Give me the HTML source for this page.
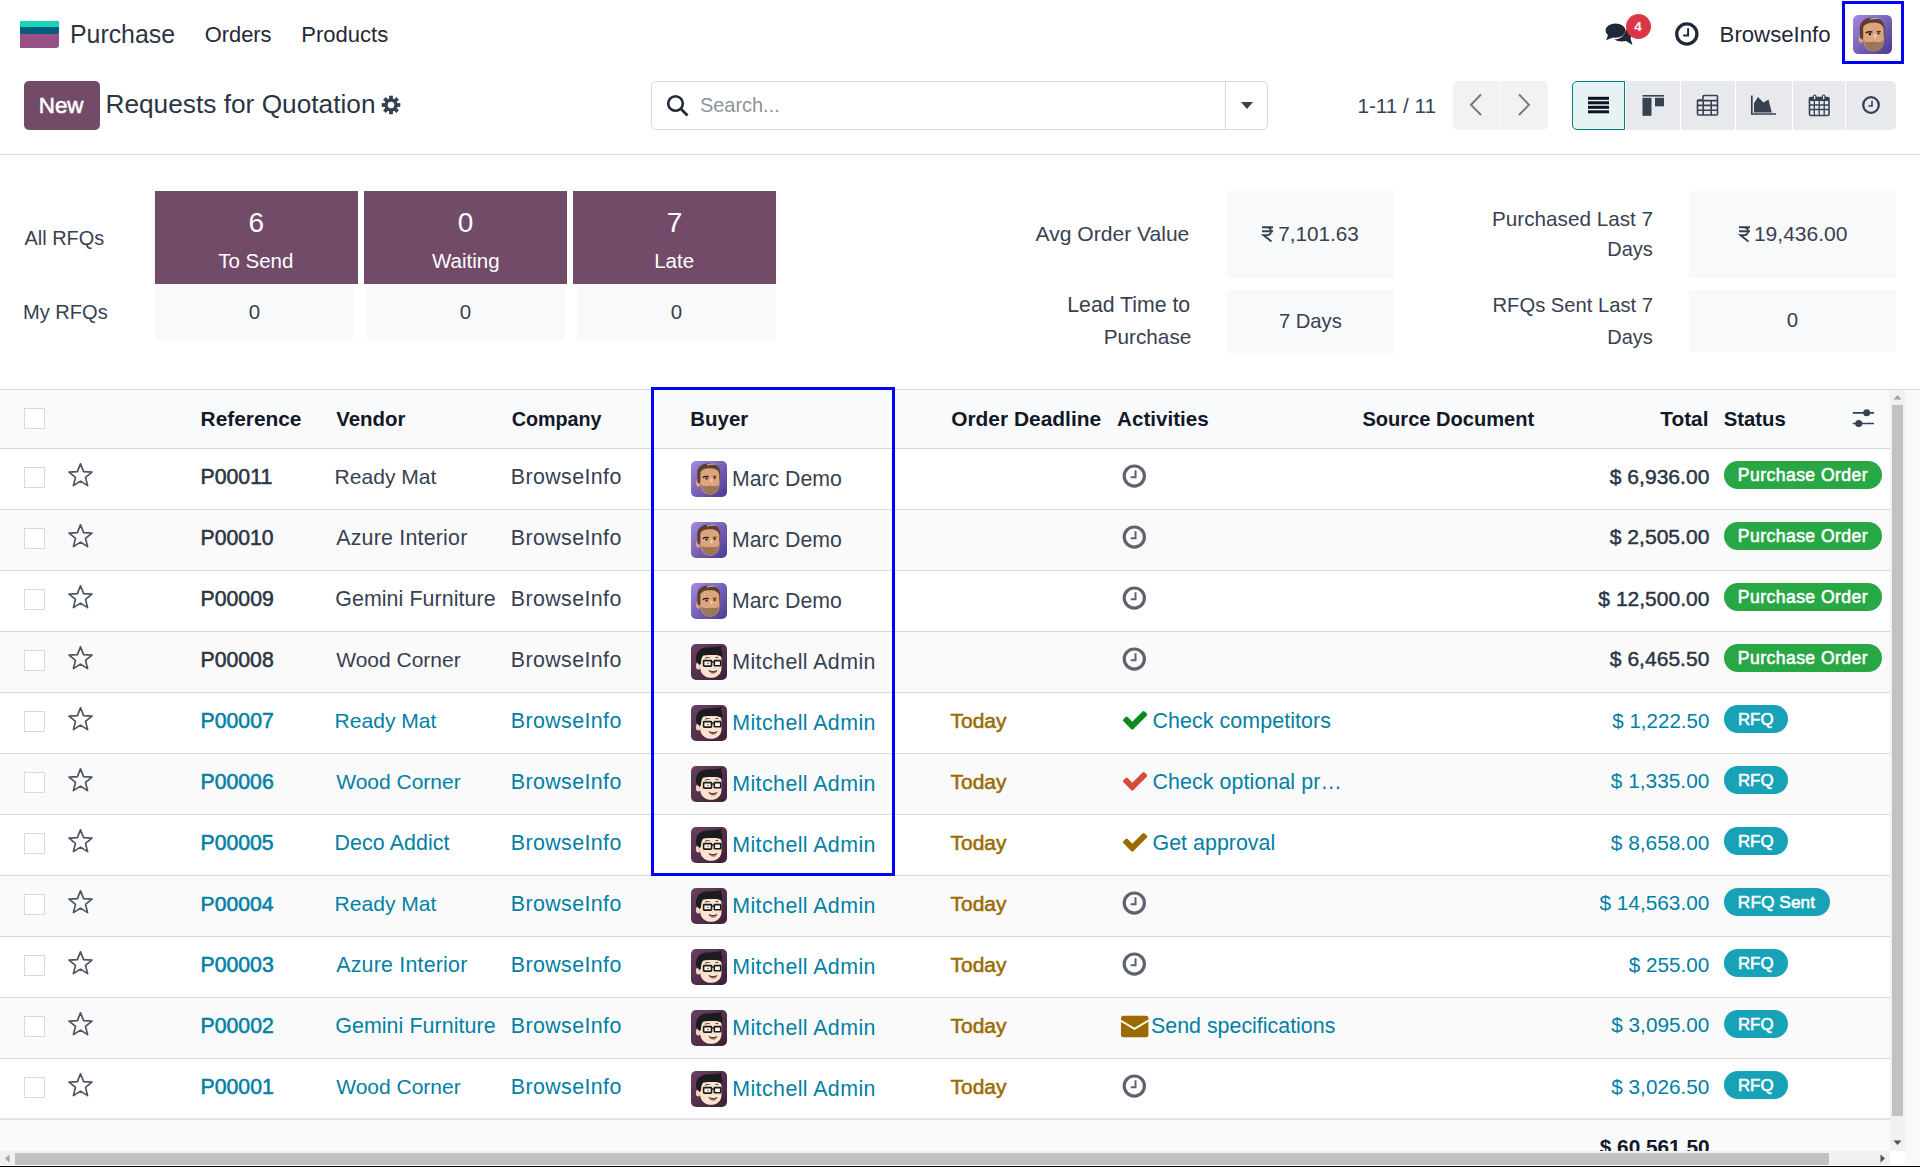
<!DOCTYPE html>
<html><head><meta charset="utf-8"><title>Requests for Quotation</title>
<style>
html,body{margin:0;padding:0;background:#fff;}
body{width:1920px;height:1167px;position:relative;overflow:hidden;font-family:"Liberation Sans",sans-serif;}
.t{position:absolute;white-space:nowrap;}
.r{position:absolute;box-sizing:content-box;}
svg.r{overflow:visible;}
</style></head><body>
<svg class="r" style="left:20px;top:21px;" width="39" height="27" viewBox="0 0 39 27">
<path d="M0 0 H36 a3 3 0 0 1 3 3 V24 a3 3 0 0 1 -3 3 H0 Z" fill="#985184"/>
<path d="M0 0 H36 a3 3 0 0 1 3 3 V10 a3 3 0 0 1 -3 3 H0 Z" fill="#005e7a"/>
<path d="M0 0 H36 a3 3 0 0 1 3 3 V6 H0 Z" fill="#1ad3bb"/>
</svg>
<div class="t" style="left:69.96px;top:22px;font-size:24.89px;line-height:24.89px;color:#2b3544;font-weight:400;">Purchase</div>
<div class="t" style="left:204.71px;top:24px;font-size:21.87px;line-height:21.87px;color:#1f2937;font-weight:400;">Orders</div>
<div class="t" style="left:301.19px;top:24px;font-size:22.07px;line-height:22.07px;color:#1f2937;font-weight:400;">Products</div>
<svg class="r" style="left:1604px;top:22px;" width="32" height="26" viewBox="0 0 32 26">
<ellipse cx="11.5" cy="8.6" rx="10" ry="7.2" fill="#1f2937"/>
<path d="M4 13 L2.2 18.2 L10 15 Z" fill="#1f2937"/>
<path d="M22 7.5 C27 9 28.5 13 26.5 16.5 L28.5 23 L22 19 C18 20 13 19.5 10.5 17.5 C16 17 20.5 14.5 22 7.5 Z" fill="#1f2937"/>
</svg>
<div class="r" style="left:1625.6px;top:14px;width:25.4px;height:25.4px;border-radius:50%;background:#dc3545;"></div>
<div class="t" style="left:1634.18px;top:20px;font-size:13.5px;line-height:13.5px;color:#fff;font-weight:700;">4</div>
<svg class="r" style="left:1674px;top:22px;" width="26" height="24" viewBox="0 0 26 24">
<circle cx="12.8" cy="12" r="10.1" fill="none" stroke="#1f2937" stroke-width="3.3"/>
<path d="M14.1 6.2 V13.4 H9.2" fill="none" stroke="#1f2937" stroke-width="2"/>
</svg>
<div class="t" style="left:1719.58px;top:24px;font-size:22.2px;line-height:22.2px;color:#1f2937;font-weight:400;">BrowseInfo</div>
<svg class="r" style="left:1853px;top:15px;" width="39" height="39" viewBox="0 0 36 36">
<defs><linearGradient id="mg" x1="0" y1="0" x2="1" y2="1"><stop offset="0" stop-color="#a58ae0"/><stop offset="1" stop-color="#4b3a8e"/></linearGradient></defs>
<rect x="0" y="0" width="36" height="36" rx="5" fill="url(#mg)"/>
<ellipse cx="7.4" cy="22" rx="2.4" ry="3.8" fill="#dba47c"/>
<path d="M6.2 12 C6.5 5 12 2.2 18.5 2.2 C25 2.2 29.5 6 29.2 13 L29 20 L26 21 L25 10 C21 8.5 15 8.5 10 10.5 L9 23 L6.4 21 Z" fill="#5e3f2c"/>
<path d="M9.4 12 C10 8.5 14 7.2 19 7.2 C24.5 7.2 27.8 9 28.2 13 L28.5 23 C28.5 30 24 33.6 19 33.6 C14 33.6 10.2 30 9.8 24 Z" fill="#dca57d"/>
<path d="M10.2 23.5 C11 30 14.5 33.6 19.2 33.6 C24 33.6 27.8 30 28.2 23 C26.5 25.5 23.5 25.2 19.5 24.8 C15.5 25 12.5 26 10.2 23.5 Z" fill="#9c7659"/>
<path d="M16 3.2 C19 2.2 23 2.4 25.5 4 C22.5 3.6 19 3.6 16 4.4 Z" fill="#b9a3d6"/>
<path d="M11.8 16.6 C13.5 15.4 16 15.2 17.8 15.6" stroke="#2a1d14" stroke-width="1.4" fill="none"/>
<circle cx="15.6" cy="17.6" r="1.1" fill="#1b1410"/><circle cx="23.6" cy="16.9" r="1" fill="#1b1410"/>
<path d="M21.8 15.6 C23 15 24.6 15 25.6 15.4" stroke="#3a2a1d" stroke-width="1" fill="none"/>
<ellipse cx="20.4" cy="19.5" rx="1.2" ry="2.2" fill="#f2c8a8"/>
</svg>
<div class="r" style="left:1842px;top:1px;width:56px;height:57px;border:3px solid #0000ff;"></div>
<div class="r" style="left:24px;top:81px;width:76px;height:49px;border-radius:5px;background:#714b67;"></div>
<div class="t" style="left:38.76px;top:95px;font-size:22.39px;line-height:22.39px;color:#fff;font-weight:500;-webkit-text-stroke:0.55px #fff;">New</div>
<div class="t" style="left:105.44px;top:91px;font-size:26.28px;line-height:26.28px;color:#2b3544;font-weight:400;">Requests for Quotation</div>
<svg class="r" style="left:381px;top:95px;" width="20" height="20" viewBox="0 0 20 20">
<g transform="translate(10 10)" fill="#374151">
<circle r="6.6"/>
<rect x="-1.9" y="-9.3" width="3.8" height="4" transform="rotate(0)"/><rect x="-1.9" y="-9.3" width="3.8" height="4" transform="rotate(45)"/><rect x="-1.9" y="-9.3" width="3.8" height="4" transform="rotate(90)"/><rect x="-1.9" y="-9.3" width="3.8" height="4" transform="rotate(135)"/><rect x="-1.9" y="-9.3" width="3.8" height="4" transform="rotate(180)"/><rect x="-1.9" y="-9.3" width="3.8" height="4" transform="rotate(225)"/><rect x="-1.9" y="-9.3" width="3.8" height="4" transform="rotate(270)"/><rect x="-1.9" y="-9.3" width="3.8" height="4" transform="rotate(315)"/>
<circle r="3.3" fill="#fff"/>
</g>
</svg>
<div class="r" style="left:651px;top:81px;width:615px;height:47px;border:1px solid #d8dadd;border-radius:5px;background:#fff;"></div>
<div class="r" style="left:1225px;top:82px;width:1px;height:47px;background:#d8dadd;"></div>
<svg class="r" style="left:666px;top:94px;" width="24" height="23" viewBox="0 0 24 23">
<circle cx="9.5" cy="9.5" r="7.3" fill="none" stroke="#1f2937" stroke-width="2.6"/>
<path d="M14.8 14.8 L21.5 21.5" stroke="#1f2937" stroke-width="2.8"/>
</svg>
<div class="t" style="left:699.89px;top:96px;font-size:19.97px;line-height:19.97px;color:#8f949c;font-weight:400;">Search...</div>
<svg class="r" style="left:1240px;top:101px;" width="14" height="9" viewBox="0 0 14 9"><path d="M1 1 H13 L7 8 Z" fill="#374151"/></svg>
<div class="t" style="left:1357.43px;top:96px;font-size:20.67px;line-height:20.67px;color:#374151;font-weight:400;">1-11 / 11</div>
<div class="r" style="left:1453px;top:81px;width:95px;height:49px;border-radius:5px;background:#f1f2f4;"></div>
<div class="r" style="left:1500px;top:81px;width:1px;height:49px;background:#fff;"></div>
<svg class="r" style="left:1466px;top:92px;" width="20" height="26" viewBox="0 0 20 26"><path d="M15 2.5 L5 12.8 L15 23" fill="none" stroke="#787878" stroke-width="1.9"/></svg>
<svg class="r" style="left:1514.3px;top:92px;" width="20" height="26" viewBox="0 0 20 26"><path d="M5 2.5 L15 12.8 L5 23" fill="none" stroke="#787878" stroke-width="1.9"/></svg>
<div class="r" style="left:1572px;top:81px;width:324px;height:49px;border-radius:5px;background:#e7e9ed;overflow:hidden;"></div>
<div class="r" style="left:1572px;top:81px;width:51px;height:47px;border:1px solid #017e84;border-radius:5px 0 0 5px;background:#e6f2f3;"></div>
<div class="r" style="left:1625px;top:81px;width:1px;height:49px;background:#fff;"></div>
<div class="r" style="left:1680px;top:81px;width:1px;height:49px;background:#fff;"></div>
<div class="r" style="left:1735px;top:81px;width:1px;height:49px;background:#fff;"></div>
<div class="r" style="left:1792px;top:81px;width:1px;height:49px;background:#fff;"></div>
<div class="r" style="left:1845px;top:81px;width:1px;height:49px;background:#fff;"></div>
<svg class="r" style="left:1587px;top:96px;" width="23" height="18" viewBox="0 0 23 18"><rect x="1" y="0.8" width="21" height="3" fill="#0b1220"/><rect x="1" y="5.3" width="21" height="3" fill="#0b1220"/><rect x="1" y="9.8" width="21" height="3" fill="#0b1220"/><rect x="1" y="14.3" width="21" height="3" fill="#0b1220"/></svg>
<svg class="r" style="left:1641px;top:94px;" width="24" height="23" viewBox="0 0 24 23"><rect x="1.5" y="1" width="21.5" height="1.6" fill="#374151"/><rect x="1.5" y="3.8" width="9" height="18" fill="#374151"/><rect x="14" y="3.8" width="9" height="8.5" fill="#374151"/></svg>
<svg class="r" style="left:1696px;top:94px;" width="23" height="23" viewBox="0 0 23 23">
<path d="M7 5.5 V2.5 a1 1 0 0 1 1 -1 H20.5 a1 1 0 0 1 1 1 V20 a1 1 0 0 1 -1 1 H2.5 a1 1 0 0 1 -1 -1 V7 a1 1 0 0 1 1 -1 H7" fill="none" stroke="#374151" stroke-width="1.6"/>
<path d="M1.5 6.6 H21.5 M1.5 11.4 H21.5 M1.5 16.2 H21.5 M7.2 6.5 V21 M15.2 6.5 V21" stroke="#374151" stroke-width="1.6"/>
</svg>
<svg class="r" style="left:1750px;top:95px;" width="28" height="21" viewBox="0 0 28 21">
<path d="M1.8 0.5 V19 H26" fill="none" stroke="#374151" stroke-width="1.7"/>
<path d="M4 17.6 V8.2 L8 2 L13.5 7.5 L18.5 4.5 L21.8 17.6 Z" fill="#374151"/>
</svg>
<svg class="r" style="left:1808px;top:94px;" width="23" height="23" viewBox="0 0 23 23">
<rect x="1.5" y="3.5" width="19.5" height="18" rx="1.2" fill="none" stroke="#374151" stroke-width="1.6"/>
<rect x="1.5" y="3.5" width="19.5" height="3.5" fill="#374151"/>
<path d="M1.5 11 H21 M1.5 15.5 H21 M6.3 7 V21.5 M11.2 7 V21.5 M16.2 7 V21.5" stroke="#374151" stroke-width="1.3"/>
<rect x="5.5" y="1" width="2.4" height="5" rx="1.2" fill="#fff" stroke="#374151" stroke-width="1.2"/>
<rect x="14.5" y="1" width="2.4" height="5" rx="1.2" fill="#fff" stroke="#374151" stroke-width="1.2"/>
</svg>
<svg class="r" style="left:1861px;top:95px;" width="20" height="20" viewBox="0 0 20 20">
<circle cx="10" cy="10" r="7.8" fill="none" stroke="#374151" stroke-width="2.3"/>
<path d="M11 5.8 V11 H7.5" fill="none" stroke="#374151" stroke-width="1.6"/>
</svg>
<div class="r" style="left:0px;top:154px;width:1920px;height:1px;background:#d8dadd;"></div>
<div class="t" style="left:24.56px;top:229px;font-size:19.91px;line-height:19.91px;color:#374151;font-weight:400;">All RFQs</div>
<div class="t" style="left:22.95px;top:302px;font-size:20.08px;line-height:20.08px;color:#374151;font-weight:400;">My RFQs</div>
<div class="r" style="left:155px;top:191px;width:203px;height:93px;background:#714b67;"></div>
<div class="t" style="left:248.62px;top:209px;font-size:28px;line-height:28px;color:#fff;font-weight:400;">6</div>
<div class="t" style="left:218.18px;top:251px;font-size:20.5px;line-height:20.5px;color:#fff;font-weight:400;">To Send</div>
<div class="r" style="left:155px;top:285px;width:199px;height:55px;background:#f8f9fa;border-radius:4px;"></div>
<div class="t" style="left:248.80px;top:302px;font-size:20.5px;line-height:20.5px;color:#374151;font-weight:400;">0</div>
<div class="r" style="left:364px;top:191px;width:203px;height:93px;background:#714b67;"></div>
<div class="t" style="left:457.71px;top:209px;font-size:28px;line-height:28px;color:#fff;font-weight:400;">0</div>
<div class="t" style="left:431.94px;top:251px;font-size:20.5px;line-height:20.5px;color:#fff;font-weight:400;">Waiting</div>
<div class="r" style="left:366px;top:285px;width:199px;height:55px;background:#f8f9fa;border-radius:4px;"></div>
<div class="t" style="left:459.80px;top:302px;font-size:20.5px;line-height:20.5px;color:#374151;font-weight:400;">0</div>
<div class="r" style="left:573px;top:191px;width:203px;height:93px;background:#714b67;"></div>
<div class="t" style="left:666.70px;top:209px;font-size:28px;line-height:28px;color:#fff;font-weight:400;">7</div>
<div class="t" style="left:654.17px;top:251px;font-size:20.5px;line-height:20.5px;color:#fff;font-weight:400;">Late</div>
<div class="r" style="left:577px;top:285px;width:199px;height:55px;background:#f8f9fa;border-radius:4px;"></div>
<div class="t" style="left:670.80px;top:302px;font-size:20.5px;line-height:20.5px;color:#374151;font-weight:400;">0</div>
<div class="r" style="left:1227px;top:191px;width:167px;height:87px;background:#f8f9fa;"></div>
<div class="r" style="left:1227px;top:290px;width:167px;height:63px;background:#f8f9fa;"></div>
<div class="r" style="left:1689px;top:191px;width:207px;height:87px;background:#f8f9fa;"></div>
<div class="r" style="left:1689px;top:290px;width:207px;height:62px;background:#f8f9fa;"></div>
<div class="t" style="left:1035.56px;top:223px;font-size:21.07px;line-height:21.07px;color:#374151;font-weight:400;">Avg Order Value</div>
<div class="t" style="left:1067.26px;top:295px;font-size:21.25px;line-height:21.25px;color:#374151;font-weight:400;">Lead Time to</div>
<div class="t" style="left:1103.70px;top:327px;font-size:20.74px;line-height:20.74px;color:#374151;font-weight:400;">Purchase</div>
<div class="t" style="left:1492.05px;top:209px;font-size:20.69px;line-height:20.69px;color:#374151;font-weight:400;">Purchased Last 7</div>
<div class="t" style="left:1607.26px;top:240px;font-size:19.95px;line-height:19.95px;color:#374151;font-weight:400;">Days</div>
<div class="t" style="left:1492.54px;top:295px;font-size:20.19px;line-height:20.19px;color:#374151;font-weight:400;">RFQs Sent Last 7</div>
<div class="t" style="left:1607.26px;top:328px;font-size:19.95px;line-height:19.95px;color:#374151;font-weight:400;">Days</div>
<svg class="r" style="left:1261px;top:226px;" width="13" height="16" viewBox="0 0 13 16">
<path d="M1 1.2 H12 M1 5.2 H12 M3 1.2 H5.5 C9 1.2 10 3 10 5.2 C10 8 8 9.3 5 9.3 H2.5 L10.5 15.5" fill="none" stroke="#374151" stroke-width="1.9"/>
</svg>
<div class="t" style="left:1278.34px;top:224px;font-size:20.7px;line-height:20.7px;color:#374151;font-weight:400;">7,101.63</div>
<div class="t" style="left:1278.91px;top:311px;font-size:20.2px;line-height:20.2px;color:#374151;font-weight:400;">7 Days</div>
<svg class="r" style="left:1737.5px;top:225.7px;" width="13" height="16" viewBox="0 0 13 16">
<path d="M1 1.2 H12 M1 5.2 H12 M3 1.2 H5.5 C9 1.2 10 3 10 5.2 C10 8 8 9.3 5 9.3 H2.5 L10.5 15.5" fill="none" stroke="#374151" stroke-width="1.9"/>
</svg>
<div class="t" style="left:1753.90px;top:223px;font-size:21.05px;line-height:21.05px;color:#374151;font-weight:400;">19,436.00</div>
<div class="t" style="left:1786.80px;top:310px;font-size:20.5px;line-height:20.5px;color:#374151;font-weight:400;">0</div>
<div class="r" style="left:0px;top:389px;width:1920px;height:1px;background:#d8dadd;"></div>
<div class="r" style="left:1905px;top:390px;width:15px;height:775px;background:#f8f9fa;"></div>
<div class="r" style="left:0px;top:390px;width:1890px;height:58px;background:#f9fafb;"></div>
<div class="r" style="left:0px;top:448px;width:1890px;height:1px;background:#d8dadd;"></div>
<div class="r" style="left:24px;top:408px;width:19px;height:19px;border:1px solid #d8dadd;background:#fff;"></div>
<div class="t" style="left:200.60px;top:409px;font-size:20.87px;line-height:20.87px;color:#111827;font-weight:700;">Reference</div>
<div class="t" style="left:336.16px;top:409px;font-size:20.42px;line-height:20.42px;color:#111827;font-weight:700;">Vendor</div>
<div class="t" style="left:511.69px;top:410px;font-size:19.73px;line-height:19.73px;color:#111827;font-weight:700;">Company</div>
<div class="t" style="left:690.33px;top:409px;font-size:20.45px;line-height:20.45px;color:#111827;font-weight:700;">Buyer</div>
<div class="t" style="left:951.14px;top:409px;font-size:20.93px;line-height:20.93px;color:#111827;font-weight:700;">Order Deadline</div>
<div class="t" style="left:1117.09px;top:409px;font-size:20.64px;line-height:20.64px;color:#111827;font-weight:700;">Activities</div>
<div class="t" style="left:1362.42px;top:409px;font-size:20.08px;line-height:20.08px;color:#111827;font-weight:700;">Source Document</div>
<div class="t" style="left:1660.29px;top:409px;font-size:20.8px;line-height:20.8px;color:#111827;font-weight:700;">Total</div>
<div class="t" style="left:1723.71px;top:409px;font-size:20.33px;line-height:20.33px;color:#111827;font-weight:700;">Status</div>
<svg class="r" style="left:1851px;top:408px;" width="24" height="20" viewBox="0 0 24 20">
<path d="M1.8 4.8 H23 M1.8 15.5 H23" stroke="#374151" stroke-width="1.7"/>
<circle cx="15.7" cy="4.8" r="3.5" fill="#374151"/><circle cx="7.7" cy="15.5" r="3.5" fill="#374151"/>
</svg>
<div class="r" style="left:0px;top:449px;width:1890px;height:60px;background:#fff;"></div>
<div class="r" style="left:0px;top:509px;width:1890px;height:1px;background:#d8dadd;"></div>
<div class="r" style="left:24px;top:467px;width:19px;height:19px;border:1px solid #d8dadd;background:#fff;"></div>
<svg class="r" style="left:67px;top:462px;" width="27" height="26" viewBox="0 0 27 26"><path d="M13.5 1.8 L16.6 9.6 L25 10.1 L18.5 15.4 L20.6 23.6 L13.5 19.1 L6.4 23.6 L8.5 15.4 L2 10.1 L10.4 9.6 Z" fill="none" stroke="#4b5563" stroke-width="1.7" stroke-linejoin="round"/></svg>
<div class="t" style="left:200.56px;top:467px;font-size:21.25px;line-height:21.25px;color:#2b3544;font-weight:500;-webkit-text-stroke:0.55px #2b3544;">P00011</div>
<div class="t" style="left:334.57px;top:466px;font-size:21.07px;line-height:21.07px;color:#374151;font-weight:400;">Ready Mat</div>
<div class="t" style="left:510.74px;top:467px;font-size:21.4px;line-height:21.4px;color:#374151;font-weight:400;letter-spacing:0.400px;">BrowseInfo</div>
<svg class="r" style="left:691px;top:461px;" width="36" height="36" viewBox="0 0 36 36">
<defs><linearGradient id="mg" x1="0" y1="0" x2="1" y2="1"><stop offset="0" stop-color="#a58ae0"/><stop offset="1" stop-color="#4b3a8e"/></linearGradient></defs>
<rect x="0" y="0" width="36" height="36" rx="5" fill="url(#mg)"/>
<ellipse cx="7.4" cy="22" rx="2.4" ry="3.8" fill="#dba47c"/>
<path d="M6.2 12 C6.5 5 12 2.2 18.5 2.2 C25 2.2 29.5 6 29.2 13 L29 20 L26 21 L25 10 C21 8.5 15 8.5 10 10.5 L9 23 L6.4 21 Z" fill="#5e3f2c"/>
<path d="M9.4 12 C10 8.5 14 7.2 19 7.2 C24.5 7.2 27.8 9 28.2 13 L28.5 23 C28.5 30 24 33.6 19 33.6 C14 33.6 10.2 30 9.8 24 Z" fill="#dca57d"/>
<path d="M10.2 23.5 C11 30 14.5 33.6 19.2 33.6 C24 33.6 27.8 30 28.2 23 C26.5 25.5 23.5 25.2 19.5 24.8 C15.5 25 12.5 26 10.2 23.5 Z" fill="#9c7659"/>
<path d="M16 3.2 C19 2.2 23 2.4 25.5 4 C22.5 3.6 19 3.6 16 4.4 Z" fill="#b9a3d6"/>
<path d="M11.8 16.6 C13.5 15.4 16 15.2 17.8 15.6" stroke="#2a1d14" stroke-width="1.4" fill="none"/>
<circle cx="15.6" cy="17.6" r="1.1" fill="#1b1410"/><circle cx="23.6" cy="16.9" r="1" fill="#1b1410"/>
<path d="M21.8 15.6 C23 15 24.6 15 25.6 15.4" stroke="#3a2a1d" stroke-width="1" fill="none"/>
<ellipse cx="20.4" cy="19.5" rx="1.2" ry="2.2" fill="#f2c8a8"/>
</svg>
<div class="t" style="left:731.95px;top:469px;font-size:21.28px;line-height:21.28px;color:#374151;font-weight:400;">Marc Demo</div>
<svg class="r" style="left:1122px;top:464px;" width="25" height="25" viewBox="0 0 25 25">
<circle cx="12.3" cy="12.1" r="10.1" fill="none" stroke="#5f636f" stroke-width="3.2"/>
<path d="M13.5 6.3 V13.2 H8.7" fill="none" stroke="#5f636f" stroke-width="2"/>
</svg>
<div class="t" style="left:1609.77px;top:466px;font-size:21.08px;line-height:21.08px;color:#2b3544;font-weight:400;-webkit-text-stroke:0.45px #2b3544;">$ 6,936.00</div>
<div class="r" style="left:1724px;top:461px;width:158px;height:28px;border-radius:14px;background:#28a745;"></div>
<div class="t" style="left:1737.86px;top:467px;font-size:17.6px;line-height:17.6px;color:#fff;font-weight:500;-webkit-text-stroke:0.55px #fff;letter-spacing:0.423px;">Purchase Order</div>
<div class="r" style="left:0px;top:510px;width:1890px;height:60px;background:#fafafa;"></div>
<div class="r" style="left:0px;top:570px;width:1890px;height:1px;background:#d8dadd;"></div>
<div class="r" style="left:24px;top:528px;width:19px;height:19px;border:1px solid #d8dadd;background:#fff;"></div>
<svg class="r" style="left:67px;top:523px;" width="27" height="26" viewBox="0 0 27 26"><path d="M13.5 1.8 L16.6 9.6 L25 10.1 L18.5 15.4 L20.6 23.6 L13.5 19.1 L6.4 23.6 L8.5 15.4 L2 10.1 L10.4 9.6 Z" fill="none" stroke="#4b5563" stroke-width="1.7" stroke-linejoin="round"/></svg>
<div class="t" style="left:200.56px;top:527px;font-size:21.19px;line-height:21.19px;color:#2b3544;font-weight:500;-webkit-text-stroke:0.55px #2b3544;">P00010</div>
<div class="t" style="left:336.26px;top:528px;font-size:21.4px;line-height:21.4px;color:#374151;font-weight:400;letter-spacing:0.203px;">Azure Interior</div>
<div class="t" style="left:510.74px;top:528px;font-size:21.4px;line-height:21.4px;color:#374151;font-weight:400;letter-spacing:0.400px;">BrowseInfo</div>
<svg class="r" style="left:691px;top:522px;" width="36" height="36" viewBox="0 0 36 36">
<defs><linearGradient id="mg" x1="0" y1="0" x2="1" y2="1"><stop offset="0" stop-color="#a58ae0"/><stop offset="1" stop-color="#4b3a8e"/></linearGradient></defs>
<rect x="0" y="0" width="36" height="36" rx="5" fill="url(#mg)"/>
<ellipse cx="7.4" cy="22" rx="2.4" ry="3.8" fill="#dba47c"/>
<path d="M6.2 12 C6.5 5 12 2.2 18.5 2.2 C25 2.2 29.5 6 29.2 13 L29 20 L26 21 L25 10 C21 8.5 15 8.5 10 10.5 L9 23 L6.4 21 Z" fill="#5e3f2c"/>
<path d="M9.4 12 C10 8.5 14 7.2 19 7.2 C24.5 7.2 27.8 9 28.2 13 L28.5 23 C28.5 30 24 33.6 19 33.6 C14 33.6 10.2 30 9.8 24 Z" fill="#dca57d"/>
<path d="M10.2 23.5 C11 30 14.5 33.6 19.2 33.6 C24 33.6 27.8 30 28.2 23 C26.5 25.5 23.5 25.2 19.5 24.8 C15.5 25 12.5 26 10.2 23.5 Z" fill="#9c7659"/>
<path d="M16 3.2 C19 2.2 23 2.4 25.5 4 C22.5 3.6 19 3.6 16 4.4 Z" fill="#b9a3d6"/>
<path d="M11.8 16.6 C13.5 15.4 16 15.2 17.8 15.6" stroke="#2a1d14" stroke-width="1.4" fill="none"/>
<circle cx="15.6" cy="17.6" r="1.1" fill="#1b1410"/><circle cx="23.6" cy="16.9" r="1" fill="#1b1410"/>
<path d="M21.8 15.6 C23 15 24.6 15 25.6 15.4" stroke="#3a2a1d" stroke-width="1" fill="none"/>
<ellipse cx="20.4" cy="19.5" rx="1.2" ry="2.2" fill="#f2c8a8"/>
</svg>
<div class="t" style="left:731.95px;top:530px;font-size:21.28px;line-height:21.28px;color:#374151;font-weight:400;">Marc Demo</div>
<svg class="r" style="left:1122px;top:525px;" width="25" height="25" viewBox="0 0 25 25">
<circle cx="12.3" cy="12.1" r="10.1" fill="none" stroke="#5f636f" stroke-width="3.2"/>
<path d="M13.5 6.3 V13.2 H8.7" fill="none" stroke="#5f636f" stroke-width="2"/>
</svg>
<div class="t" style="left:1609.77px;top:526px;font-size:21.08px;line-height:21.08px;color:#2b3544;font-weight:400;-webkit-text-stroke:0.45px #2b3544;">$ 2,505.00</div>
<div class="r" style="left:1724px;top:522px;width:158px;height:28px;border-radius:14px;background:#28a745;"></div>
<div class="t" style="left:1737.86px;top:528px;font-size:17.6px;line-height:17.6px;color:#fff;font-weight:500;-webkit-text-stroke:0.55px #fff;letter-spacing:0.423px;">Purchase Order</div>
<div class="r" style="left:0px;top:571px;width:1890px;height:60px;background:#fff;"></div>
<div class="r" style="left:0px;top:631px;width:1890px;height:1px;background:#d8dadd;"></div>
<div class="r" style="left:24px;top:589px;width:19px;height:19px;border:1px solid #d8dadd;background:#fff;"></div>
<svg class="r" style="left:67px;top:584px;" width="27" height="26" viewBox="0 0 27 26"><path d="M13.5 1.8 L16.6 9.6 L25 10.1 L18.5 15.4 L20.6 23.6 L13.5 19.1 L6.4 23.6 L8.5 15.4 L2 10.1 L10.4 9.6 Z" fill="none" stroke="#4b5563" stroke-width="1.7" stroke-linejoin="round"/></svg>
<div class="t" style="left:200.56px;top:589px;font-size:21.25px;line-height:21.25px;color:#2b3544;font-weight:500;-webkit-text-stroke:0.55px #2b3544;">P00009</div>
<div class="t" style="left:335.22px;top:589px;font-size:21.4px;line-height:21.4px;color:#374151;font-weight:400;letter-spacing:0.071px;">Gemini Furniture</div>
<div class="t" style="left:510.74px;top:589px;font-size:21.4px;line-height:21.4px;color:#374151;font-weight:400;letter-spacing:0.400px;">BrowseInfo</div>
<svg class="r" style="left:691px;top:583px;" width="36" height="36" viewBox="0 0 36 36">
<defs><linearGradient id="mg" x1="0" y1="0" x2="1" y2="1"><stop offset="0" stop-color="#a58ae0"/><stop offset="1" stop-color="#4b3a8e"/></linearGradient></defs>
<rect x="0" y="0" width="36" height="36" rx="5" fill="url(#mg)"/>
<ellipse cx="7.4" cy="22" rx="2.4" ry="3.8" fill="#dba47c"/>
<path d="M6.2 12 C6.5 5 12 2.2 18.5 2.2 C25 2.2 29.5 6 29.2 13 L29 20 L26 21 L25 10 C21 8.5 15 8.5 10 10.5 L9 23 L6.4 21 Z" fill="#5e3f2c"/>
<path d="M9.4 12 C10 8.5 14 7.2 19 7.2 C24.5 7.2 27.8 9 28.2 13 L28.5 23 C28.5 30 24 33.6 19 33.6 C14 33.6 10.2 30 9.8 24 Z" fill="#dca57d"/>
<path d="M10.2 23.5 C11 30 14.5 33.6 19.2 33.6 C24 33.6 27.8 30 28.2 23 C26.5 25.5 23.5 25.2 19.5 24.8 C15.5 25 12.5 26 10.2 23.5 Z" fill="#9c7659"/>
<path d="M16 3.2 C19 2.2 23 2.4 25.5 4 C22.5 3.6 19 3.6 16 4.4 Z" fill="#b9a3d6"/>
<path d="M11.8 16.6 C13.5 15.4 16 15.2 17.8 15.6" stroke="#2a1d14" stroke-width="1.4" fill="none"/>
<circle cx="15.6" cy="17.6" r="1.1" fill="#1b1410"/><circle cx="23.6" cy="16.9" r="1" fill="#1b1410"/>
<path d="M21.8 15.6 C23 15 24.6 15 25.6 15.4" stroke="#3a2a1d" stroke-width="1" fill="none"/>
<ellipse cx="20.4" cy="19.5" rx="1.2" ry="2.2" fill="#f2c8a8"/>
</svg>
<div class="t" style="left:731.95px;top:591px;font-size:21.28px;line-height:21.28px;color:#374151;font-weight:400;">Marc Demo</div>
<svg class="r" style="left:1122px;top:586px;" width="25" height="25" viewBox="0 0 25 25">
<circle cx="12.3" cy="12.1" r="10.1" fill="none" stroke="#5f636f" stroke-width="3.2"/>
<path d="M13.5 6.3 V13.2 H8.7" fill="none" stroke="#5f636f" stroke-width="2"/>
</svg>
<div class="t" style="left:1598.37px;top:588px;font-size:21.02px;line-height:21.02px;color:#2b3544;font-weight:400;-webkit-text-stroke:0.45px #2b3544;">$ 12,500.00</div>
<div class="r" style="left:1724px;top:583px;width:158px;height:28px;border-radius:14px;background:#28a745;"></div>
<div class="t" style="left:1737.86px;top:589px;font-size:17.6px;line-height:17.6px;color:#fff;font-weight:500;-webkit-text-stroke:0.55px #fff;letter-spacing:0.423px;">Purchase Order</div>
<div class="r" style="left:0px;top:632px;width:1890px;height:60px;background:#fafafa;"></div>
<div class="r" style="left:0px;top:692px;width:1890px;height:1px;background:#d8dadd;"></div>
<div class="r" style="left:24px;top:650px;width:19px;height:19px;border:1px solid #d8dadd;background:#fff;"></div>
<svg class="r" style="left:67px;top:645px;" width="27" height="26" viewBox="0 0 27 26"><path d="M13.5 1.8 L16.6 9.6 L25 10.1 L18.5 15.4 L20.6 23.6 L13.5 19.1 L6.4 23.6 L8.5 15.4 L2 10.1 L10.4 9.6 Z" fill="none" stroke="#4b5563" stroke-width="1.7" stroke-linejoin="round"/></svg>
<div class="t" style="left:200.56px;top:649px;font-size:21.22px;line-height:21.22px;color:#2b3544;font-weight:500;-webkit-text-stroke:0.55px #2b3544;">P00008</div>
<div class="t" style="left:336.21px;top:649px;font-size:21.01px;line-height:21.01px;color:#374151;font-weight:400;">Wood Corner</div>
<div class="t" style="left:510.74px;top:650px;font-size:21.4px;line-height:21.4px;color:#374151;font-weight:400;letter-spacing:0.400px;">BrowseInfo</div>
<svg class="r" style="left:691px;top:644px;" width="36" height="36" viewBox="0 0 36 36">
<defs><linearGradient id="ag" x1="0" y1="0" x2="1" y2="1"><stop offset="0" stop-color="#6a4262"/><stop offset="1" stop-color="#3e1f36"/></linearGradient></defs>
<rect x="0" y="0" width="36" height="36" rx="5" fill="url(#ag)"/>
<ellipse cx="7.3" cy="22" rx="2.4" ry="3.6" fill="#f5d2bd"/>
<path d="M9 14 C9 11 12 10.5 19 10.5 C26 10.5 30.5 11 30.5 15 L30.5 24 C30.5 30.5 25.5 33.8 20 33.8 C14.5 33.8 9.5 30.5 9.2 24 Z" fill="#fbe3cf"/>
<path d="M5 16 C4.5 8 9 3.5 16 3.4 L26 3 L30.5 1.8 L30 5 C31.5 7 31.6 10 31 12.5 C27 10.5 20 11 12.5 11.4 C11 12 10.2 15 9.8 20 L8.4 21 C7 19.5 5.6 18 5 16 Z" fill="#1c1c1e"/>
<rect x="12.6" y="16.6" width="7.9" height="5.5" rx="0.6" fill="#fff6ef" stroke="#1d1d1d" stroke-width="1.6"/>
<rect x="23.3" y="16.6" width="6.4" height="5.2" rx="0.6" fill="#fff6ef" stroke="#1d1d1d" stroke-width="1.6"/>
<path d="M20.5 18 H23.3" stroke="#1d1d1d" stroke-width="1.3"/>
<path d="M14 14.3 C15.5 13.5 17 13.4 18.6 13.6 M24.5 13.6 C25.5 13.2 26.5 13.3 27.2 13.8" stroke="#3a3a3a" stroke-width="1" fill="none"/>
<circle cx="17" cy="19.5" r="0.7" fill="#333"/>
<path d="M18 26.6 C20.5 28 23.5 28 26 26.6 C25 28.8 19 28.8 18 26.6 Z" fill="#fff" stroke="#3a2a2a" stroke-width="0.9"/>
<path d="M19.5 28.6 C21.5 29.4 23.5 29.4 24.8 28.6" stroke="#b4575a" stroke-width="0.9" fill="none"/>
</svg>
<div class="t" style="left:732.24px;top:652px;font-size:21.4px;line-height:21.4px;color:#374151;font-weight:400;letter-spacing:0.408px;">Mitchell Admin</div>
<svg class="r" style="left:1122px;top:647px;" width="25" height="25" viewBox="0 0 25 25">
<circle cx="12.3" cy="12.1" r="10.1" fill="none" stroke="#5f636f" stroke-width="3.2"/>
<path d="M13.5 6.3 V13.2 H8.7" fill="none" stroke="#5f636f" stroke-width="2"/>
</svg>
<div class="t" style="left:1609.87px;top:648px;font-size:21.06px;line-height:21.06px;color:#2b3544;font-weight:400;-webkit-text-stroke:0.45px #2b3544;">$ 6,465.50</div>
<div class="r" style="left:1724px;top:644px;width:158px;height:28px;border-radius:14px;background:#28a745;"></div>
<div class="t" style="left:1737.86px;top:650px;font-size:17.6px;line-height:17.6px;color:#fff;font-weight:500;-webkit-text-stroke:0.55px #fff;letter-spacing:0.423px;">Purchase Order</div>
<div class="r" style="left:0px;top:693px;width:1890px;height:60px;background:#fff;"></div>
<div class="r" style="left:0px;top:753px;width:1890px;height:1px;background:#d8dadd;"></div>
<div class="r" style="left:24px;top:711px;width:19px;height:19px;border:1px solid #d8dadd;background:#fff;"></div>
<svg class="r" style="left:67px;top:706px;" width="27" height="26" viewBox="0 0 27 26"><path d="M13.5 1.8 L16.6 9.6 L25 10.1 L18.5 15.4 L20.6 23.6 L13.5 19.1 L6.4 23.6 L8.5 15.4 L2 10.1 L10.4 9.6 Z" fill="none" stroke="#4b5563" stroke-width="1.7" stroke-linejoin="round"/></svg>
<div class="t" style="left:200.56px;top:711px;font-size:21.26px;line-height:21.26px;color:#0180a5;font-weight:500;-webkit-text-stroke:0.55px #0180a5;">P00007</div>
<div class="t" style="left:334.57px;top:710px;font-size:21.07px;line-height:21.07px;color:#0180a5;font-weight:400;">Ready Mat</div>
<div class="t" style="left:510.74px;top:711px;font-size:21.4px;line-height:21.4px;color:#0180a5;font-weight:400;letter-spacing:0.400px;">BrowseInfo</div>
<svg class="r" style="left:691px;top:705px;" width="36" height="36" viewBox="0 0 36 36">
<defs><linearGradient id="ag" x1="0" y1="0" x2="1" y2="1"><stop offset="0" stop-color="#6a4262"/><stop offset="1" stop-color="#3e1f36"/></linearGradient></defs>
<rect x="0" y="0" width="36" height="36" rx="5" fill="url(#ag)"/>
<ellipse cx="7.3" cy="22" rx="2.4" ry="3.6" fill="#f5d2bd"/>
<path d="M9 14 C9 11 12 10.5 19 10.5 C26 10.5 30.5 11 30.5 15 L30.5 24 C30.5 30.5 25.5 33.8 20 33.8 C14.5 33.8 9.5 30.5 9.2 24 Z" fill="#fbe3cf"/>
<path d="M5 16 C4.5 8 9 3.5 16 3.4 L26 3 L30.5 1.8 L30 5 C31.5 7 31.6 10 31 12.5 C27 10.5 20 11 12.5 11.4 C11 12 10.2 15 9.8 20 L8.4 21 C7 19.5 5.6 18 5 16 Z" fill="#1c1c1e"/>
<rect x="12.6" y="16.6" width="7.9" height="5.5" rx="0.6" fill="#fff6ef" stroke="#1d1d1d" stroke-width="1.6"/>
<rect x="23.3" y="16.6" width="6.4" height="5.2" rx="0.6" fill="#fff6ef" stroke="#1d1d1d" stroke-width="1.6"/>
<path d="M20.5 18 H23.3" stroke="#1d1d1d" stroke-width="1.3"/>
<path d="M14 14.3 C15.5 13.5 17 13.4 18.6 13.6 M24.5 13.6 C25.5 13.2 26.5 13.3 27.2 13.8" stroke="#3a3a3a" stroke-width="1" fill="none"/>
<circle cx="17" cy="19.5" r="0.7" fill="#333"/>
<path d="M18 26.6 C20.5 28 23.5 28 26 26.6 C25 28.8 19 28.8 18 26.6 Z" fill="#fff" stroke="#3a2a2a" stroke-width="0.9"/>
<path d="M19.5 28.6 C21.5 29.4 23.5 29.4 24.8 28.6" stroke="#b4575a" stroke-width="0.9" fill="none"/>
</svg>
<div class="t" style="left:732.24px;top:713px;font-size:21.4px;line-height:21.4px;color:#0180a5;font-weight:400;letter-spacing:0.408px;">Mitchell Admin</div>
<div class="t" style="left:950.53px;top:711px;font-size:20.94px;line-height:20.94px;color:#9a6b01;font-weight:500;-webkit-text-stroke:0.55px #9a6b01;">Today</div>
<svg class="r" style="left:1122.6px;top:711px" width="24.2" height="18.6" viewBox="121 -1202 1550 1188"><path transform="scale(1,-1)" fill="#0b8a1d" d="M1671 970q0 40-28 68l-136 136q-28 28-68 28t-68-28l-656-657-294 295q-28 28-68 28t-68-28l-136-136q-28-28-28-68t28-68l362-362 136-136q28-28 68-28t68 28l136 136 724 724q28 28 28 68z"/></svg>
<div class="t" style="left:1152.51px;top:711px;font-size:21.4px;line-height:21.4px;color:#0180a5;font-weight:400;letter-spacing:0.078px;">Check competitors</div>
<div class="t" style="left:1612.28px;top:711px;font-size:20.55px;line-height:20.55px;color:#0180a5;font-weight:400;">$ 1,222.50</div>
<div class="r" style="left:1724px;top:705px;width:64px;height:28px;border-radius:14px;background:#17a2b8;"></div>
<div class="t" style="left:1737.92px;top:712px;font-size:16.86px;line-height:16.86px;color:#fff;font-weight:500;-webkit-text-stroke:0.55px #fff;">RFQ</div>
<div class="r" style="left:0px;top:754px;width:1890px;height:60px;background:#fafafa;"></div>
<div class="r" style="left:0px;top:814px;width:1890px;height:1px;background:#d8dadd;"></div>
<div class="r" style="left:24px;top:772px;width:19px;height:19px;border:1px solid #d8dadd;background:#fff;"></div>
<svg class="r" style="left:67px;top:767px;" width="27" height="26" viewBox="0 0 27 26"><path d="M13.5 1.8 L16.6 9.6 L25 10.1 L18.5 15.4 L20.6 23.6 L13.5 19.1 L6.4 23.6 L8.5 15.4 L2 10.1 L10.4 9.6 Z" fill="none" stroke="#4b5563" stroke-width="1.7" stroke-linejoin="round"/></svg>
<div class="t" style="left:200.56px;top:771px;font-size:21.22px;line-height:21.22px;color:#0180a5;font-weight:500;-webkit-text-stroke:0.55px #0180a5;">P00006</div>
<div class="t" style="left:336.21px;top:771px;font-size:21.01px;line-height:21.01px;color:#0180a5;font-weight:400;">Wood Corner</div>
<div class="t" style="left:510.74px;top:772px;font-size:21.4px;line-height:21.4px;color:#0180a5;font-weight:400;letter-spacing:0.400px;">BrowseInfo</div>
<svg class="r" style="left:691px;top:766px;" width="36" height="36" viewBox="0 0 36 36">
<defs><linearGradient id="ag" x1="0" y1="0" x2="1" y2="1"><stop offset="0" stop-color="#6a4262"/><stop offset="1" stop-color="#3e1f36"/></linearGradient></defs>
<rect x="0" y="0" width="36" height="36" rx="5" fill="url(#ag)"/>
<ellipse cx="7.3" cy="22" rx="2.4" ry="3.6" fill="#f5d2bd"/>
<path d="M9 14 C9 11 12 10.5 19 10.5 C26 10.5 30.5 11 30.5 15 L30.5 24 C30.5 30.5 25.5 33.8 20 33.8 C14.5 33.8 9.5 30.5 9.2 24 Z" fill="#fbe3cf"/>
<path d="M5 16 C4.5 8 9 3.5 16 3.4 L26 3 L30.5 1.8 L30 5 C31.5 7 31.6 10 31 12.5 C27 10.5 20 11 12.5 11.4 C11 12 10.2 15 9.8 20 L8.4 21 C7 19.5 5.6 18 5 16 Z" fill="#1c1c1e"/>
<rect x="12.6" y="16.6" width="7.9" height="5.5" rx="0.6" fill="#fff6ef" stroke="#1d1d1d" stroke-width="1.6"/>
<rect x="23.3" y="16.6" width="6.4" height="5.2" rx="0.6" fill="#fff6ef" stroke="#1d1d1d" stroke-width="1.6"/>
<path d="M20.5 18 H23.3" stroke="#1d1d1d" stroke-width="1.3"/>
<path d="M14 14.3 C15.5 13.5 17 13.4 18.6 13.6 M24.5 13.6 C25.5 13.2 26.5 13.3 27.2 13.8" stroke="#3a3a3a" stroke-width="1" fill="none"/>
<circle cx="17" cy="19.5" r="0.7" fill="#333"/>
<path d="M18 26.6 C20.5 28 23.5 28 26 26.6 C25 28.8 19 28.8 18 26.6 Z" fill="#fff" stroke="#3a2a2a" stroke-width="0.9"/>
<path d="M19.5 28.6 C21.5 29.4 23.5 29.4 24.8 28.6" stroke="#b4575a" stroke-width="0.9" fill="none"/>
</svg>
<div class="t" style="left:732.24px;top:774px;font-size:21.4px;line-height:21.4px;color:#0180a5;font-weight:400;letter-spacing:0.408px;">Mitchell Admin</div>
<div class="t" style="left:950.53px;top:772px;font-size:20.94px;line-height:20.94px;color:#9a6b01;font-weight:500;-webkit-text-stroke:0.55px #9a6b01;">Today</div>
<svg class="r" style="left:1122.6px;top:772px" width="24.2" height="18.6" viewBox="121 -1202 1550 1188"><path transform="scale(1,-1)" fill="#d44c3b" d="M1671 970q0 40-28 68l-136 136q-28 28-68 28t-68-28l-656-657-294 295q-28 28-68 28t-68-28l-136-136q-28-28-28-68t28-68l362-362 136-136q28-28 68-28t68 28l136 136 724 724q28 28 28 68z"/></svg>
<div class="t" style="left:1152.51px;top:772px;font-size:21.4px;line-height:21.4px;color:#0180a5;font-weight:400;letter-spacing:0.085px;">Check optional pr…</div>
<div class="t" style="left:1610.78px;top:771px;font-size:20.87px;line-height:20.87px;color:#0180a5;font-weight:400;">$ 1,335.00</div>
<div class="r" style="left:1724px;top:766px;width:64px;height:28px;border-radius:14px;background:#17a2b8;"></div>
<div class="t" style="left:1737.92px;top:773px;font-size:16.86px;line-height:16.86px;color:#fff;font-weight:500;-webkit-text-stroke:0.55px #fff;">RFQ</div>
<div class="r" style="left:0px;top:815px;width:1890px;height:60px;background:#fff;"></div>
<div class="r" style="left:0px;top:875px;width:1890px;height:1px;background:#d8dadd;"></div>
<div class="r" style="left:24px;top:833px;width:19px;height:19px;border:1px solid #d8dadd;background:#fff;"></div>
<svg class="r" style="left:67px;top:828px;" width="27" height="26" viewBox="0 0 27 26"><path d="M13.5 1.8 L16.6 9.6 L25 10.1 L18.5 15.4 L20.6 23.6 L13.5 19.1 L6.4 23.6 L8.5 15.4 L2 10.1 L10.4 9.6 Z" fill="none" stroke="#4b5563" stroke-width="1.7" stroke-linejoin="round"/></svg>
<div class="t" style="left:200.56px;top:832px;font-size:21.21px;line-height:21.21px;color:#0180a5;font-weight:500;-webkit-text-stroke:0.55px #0180a5;">P00005</div>
<div class="t" style="left:334.54px;top:833px;font-size:21.4px;line-height:21.4px;color:#0180a5;font-weight:400;letter-spacing:0.083px;">Deco Addict</div>
<div class="t" style="left:510.74px;top:833px;font-size:21.4px;line-height:21.4px;color:#0180a5;font-weight:400;letter-spacing:0.400px;">BrowseInfo</div>
<svg class="r" style="left:691px;top:827px;" width="36" height="36" viewBox="0 0 36 36">
<defs><linearGradient id="ag" x1="0" y1="0" x2="1" y2="1"><stop offset="0" stop-color="#6a4262"/><stop offset="1" stop-color="#3e1f36"/></linearGradient></defs>
<rect x="0" y="0" width="36" height="36" rx="5" fill="url(#ag)"/>
<ellipse cx="7.3" cy="22" rx="2.4" ry="3.6" fill="#f5d2bd"/>
<path d="M9 14 C9 11 12 10.5 19 10.5 C26 10.5 30.5 11 30.5 15 L30.5 24 C30.5 30.5 25.5 33.8 20 33.8 C14.5 33.8 9.5 30.5 9.2 24 Z" fill="#fbe3cf"/>
<path d="M5 16 C4.5 8 9 3.5 16 3.4 L26 3 L30.5 1.8 L30 5 C31.5 7 31.6 10 31 12.5 C27 10.5 20 11 12.5 11.4 C11 12 10.2 15 9.8 20 L8.4 21 C7 19.5 5.6 18 5 16 Z" fill="#1c1c1e"/>
<rect x="12.6" y="16.6" width="7.9" height="5.5" rx="0.6" fill="#fff6ef" stroke="#1d1d1d" stroke-width="1.6"/>
<rect x="23.3" y="16.6" width="6.4" height="5.2" rx="0.6" fill="#fff6ef" stroke="#1d1d1d" stroke-width="1.6"/>
<path d="M20.5 18 H23.3" stroke="#1d1d1d" stroke-width="1.3"/>
<path d="M14 14.3 C15.5 13.5 17 13.4 18.6 13.6 M24.5 13.6 C25.5 13.2 26.5 13.3 27.2 13.8" stroke="#3a3a3a" stroke-width="1" fill="none"/>
<circle cx="17" cy="19.5" r="0.7" fill="#333"/>
<path d="M18 26.6 C20.5 28 23.5 28 26 26.6 C25 28.8 19 28.8 18 26.6 Z" fill="#fff" stroke="#3a2a2a" stroke-width="0.9"/>
<path d="M19.5 28.6 C21.5 29.4 23.5 29.4 24.8 28.6" stroke="#b4575a" stroke-width="0.9" fill="none"/>
</svg>
<div class="t" style="left:732.24px;top:835px;font-size:21.4px;line-height:21.4px;color:#0180a5;font-weight:400;letter-spacing:0.408px;">Mitchell Admin</div>
<div class="t" style="left:950.53px;top:833px;font-size:20.94px;line-height:20.94px;color:#9a6b01;font-weight:500;-webkit-text-stroke:0.55px #9a6b01;">Today</div>
<svg class="r" style="left:1122.6px;top:833px" width="24.2" height="18.6" viewBox="121 -1202 1550 1188"><path transform="scale(1,-1)" fill="#9a6b01" d="M1671 970q0 40-28 68l-136 136q-28 28-68 28t-68-28l-656-657-294 295q-28 28-68 28t-68-28l-136-136q-28-28-28-68t28-68l362-362 136-136q28-28 68-28t68 28l136 136 724 724q28 28 28 68z"/></svg>
<div class="t" style="left:1152.52px;top:833px;font-size:21.4px;line-height:21.4px;color:#0180a5;font-weight:400;letter-spacing:0.025px;">Get approval</div>
<div class="t" style="left:1610.78px;top:833px;font-size:20.87px;line-height:20.87px;color:#0180a5;font-weight:400;">$ 8,658.00</div>
<div class="r" style="left:1724px;top:827px;width:64px;height:28px;border-radius:14px;background:#17a2b8;"></div>
<div class="t" style="left:1737.92px;top:834px;font-size:16.86px;line-height:16.86px;color:#fff;font-weight:500;-webkit-text-stroke:0.55px #fff;">RFQ</div>
<div class="r" style="left:0px;top:876px;width:1890px;height:60px;background:#fafafa;"></div>
<div class="r" style="left:0px;top:936px;width:1890px;height:1px;background:#d8dadd;"></div>
<div class="r" style="left:24px;top:894px;width:19px;height:19px;border:1px solid #d8dadd;background:#fff;"></div>
<svg class="r" style="left:67px;top:889px;" width="27" height="26" viewBox="0 0 27 26"><path d="M13.5 1.8 L16.6 9.6 L25 10.1 L18.5 15.4 L20.6 23.6 L13.5 19.1 L6.4 23.6 L8.5 15.4 L2 10.1 L10.4 9.6 Z" fill="none" stroke="#4b5563" stroke-width="1.7" stroke-linejoin="round"/></svg>
<div class="t" style="left:200.57px;top:893px;font-size:21.13px;line-height:21.13px;color:#0180a5;font-weight:500;-webkit-text-stroke:0.55px #0180a5;">P00004</div>
<div class="t" style="left:334.57px;top:893px;font-size:21.07px;line-height:21.07px;color:#0180a5;font-weight:400;">Ready Mat</div>
<div class="t" style="left:510.74px;top:894px;font-size:21.4px;line-height:21.4px;color:#0180a5;font-weight:400;letter-spacing:0.400px;">BrowseInfo</div>
<svg class="r" style="left:691px;top:888px;" width="36" height="36" viewBox="0 0 36 36">
<defs><linearGradient id="ag" x1="0" y1="0" x2="1" y2="1"><stop offset="0" stop-color="#6a4262"/><stop offset="1" stop-color="#3e1f36"/></linearGradient></defs>
<rect x="0" y="0" width="36" height="36" rx="5" fill="url(#ag)"/>
<ellipse cx="7.3" cy="22" rx="2.4" ry="3.6" fill="#f5d2bd"/>
<path d="M9 14 C9 11 12 10.5 19 10.5 C26 10.5 30.5 11 30.5 15 L30.5 24 C30.5 30.5 25.5 33.8 20 33.8 C14.5 33.8 9.5 30.5 9.2 24 Z" fill="#fbe3cf"/>
<path d="M5 16 C4.5 8 9 3.5 16 3.4 L26 3 L30.5 1.8 L30 5 C31.5 7 31.6 10 31 12.5 C27 10.5 20 11 12.5 11.4 C11 12 10.2 15 9.8 20 L8.4 21 C7 19.5 5.6 18 5 16 Z" fill="#1c1c1e"/>
<rect x="12.6" y="16.6" width="7.9" height="5.5" rx="0.6" fill="#fff6ef" stroke="#1d1d1d" stroke-width="1.6"/>
<rect x="23.3" y="16.6" width="6.4" height="5.2" rx="0.6" fill="#fff6ef" stroke="#1d1d1d" stroke-width="1.6"/>
<path d="M20.5 18 H23.3" stroke="#1d1d1d" stroke-width="1.3"/>
<path d="M14 14.3 C15.5 13.5 17 13.4 18.6 13.6 M24.5 13.6 C25.5 13.2 26.5 13.3 27.2 13.8" stroke="#3a3a3a" stroke-width="1" fill="none"/>
<circle cx="17" cy="19.5" r="0.7" fill="#333"/>
<path d="M18 26.6 C20.5 28 23.5 28 26 26.6 C25 28.8 19 28.8 18 26.6 Z" fill="#fff" stroke="#3a2a2a" stroke-width="0.9"/>
<path d="M19.5 28.6 C21.5 29.4 23.5 29.4 24.8 28.6" stroke="#b4575a" stroke-width="0.9" fill="none"/>
</svg>
<div class="t" style="left:732.24px;top:896px;font-size:21.4px;line-height:21.4px;color:#0180a5;font-weight:400;letter-spacing:0.408px;">Mitchell Admin</div>
<div class="t" style="left:950.53px;top:894px;font-size:20.94px;line-height:20.94px;color:#9a6b01;font-weight:500;-webkit-text-stroke:0.55px #9a6b01;">Today</div>
<svg class="r" style="left:1122px;top:891px;" width="25" height="25" viewBox="0 0 25 25">
<circle cx="12.3" cy="12.1" r="10.1" fill="none" stroke="#5f636f" stroke-width="3.2"/>
<path d="M13.5 6.3 V13.2 H8.7" fill="none" stroke="#5f636f" stroke-width="2"/>
</svg>
<div class="t" style="left:1599.38px;top:893px;font-size:20.83px;line-height:20.83px;color:#0180a5;font-weight:400;">$ 14,563.00</div>
<div class="r" style="left:1724px;top:888px;width:106px;height:28px;border-radius:14px;background:#17a2b8;"></div>
<div class="t" style="left:1737.87px;top:894px;font-size:17.38px;line-height:17.38px;color:#fff;font-weight:500;-webkit-text-stroke:0.55px #fff;">RFQ Sent</div>
<div class="r" style="left:0px;top:937px;width:1890px;height:60px;background:#fff;"></div>
<div class="r" style="left:0px;top:997px;width:1890px;height:1px;background:#d8dadd;"></div>
<div class="r" style="left:24px;top:955px;width:19px;height:19px;border:1px solid #d8dadd;background:#fff;"></div>
<svg class="r" style="left:67px;top:950px;" width="27" height="26" viewBox="0 0 27 26"><path d="M13.5 1.8 L16.6 9.6 L25 10.1 L18.5 15.4 L20.6 23.6 L13.5 19.1 L6.4 23.6 L8.5 15.4 L2 10.1 L10.4 9.6 Z" fill="none" stroke="#4b5563" stroke-width="1.7" stroke-linejoin="round"/></svg>
<div class="t" style="left:200.56px;top:954px;font-size:21.22px;line-height:21.22px;color:#0180a5;font-weight:500;-webkit-text-stroke:0.55px #0180a5;">P00003</div>
<div class="t" style="left:336.26px;top:955px;font-size:21.4px;line-height:21.4px;color:#0180a5;font-weight:400;letter-spacing:0.203px;">Azure Interior</div>
<div class="t" style="left:510.74px;top:955px;font-size:21.4px;line-height:21.4px;color:#0180a5;font-weight:400;letter-spacing:0.400px;">BrowseInfo</div>
<svg class="r" style="left:691px;top:949px;" width="36" height="36" viewBox="0 0 36 36">
<defs><linearGradient id="ag" x1="0" y1="0" x2="1" y2="1"><stop offset="0" stop-color="#6a4262"/><stop offset="1" stop-color="#3e1f36"/></linearGradient></defs>
<rect x="0" y="0" width="36" height="36" rx="5" fill="url(#ag)"/>
<ellipse cx="7.3" cy="22" rx="2.4" ry="3.6" fill="#f5d2bd"/>
<path d="M9 14 C9 11 12 10.5 19 10.5 C26 10.5 30.5 11 30.5 15 L30.5 24 C30.5 30.5 25.5 33.8 20 33.8 C14.5 33.8 9.5 30.5 9.2 24 Z" fill="#fbe3cf"/>
<path d="M5 16 C4.5 8 9 3.5 16 3.4 L26 3 L30.5 1.8 L30 5 C31.5 7 31.6 10 31 12.5 C27 10.5 20 11 12.5 11.4 C11 12 10.2 15 9.8 20 L8.4 21 C7 19.5 5.6 18 5 16 Z" fill="#1c1c1e"/>
<rect x="12.6" y="16.6" width="7.9" height="5.5" rx="0.6" fill="#fff6ef" stroke="#1d1d1d" stroke-width="1.6"/>
<rect x="23.3" y="16.6" width="6.4" height="5.2" rx="0.6" fill="#fff6ef" stroke="#1d1d1d" stroke-width="1.6"/>
<path d="M20.5 18 H23.3" stroke="#1d1d1d" stroke-width="1.3"/>
<path d="M14 14.3 C15.5 13.5 17 13.4 18.6 13.6 M24.5 13.6 C25.5 13.2 26.5 13.3 27.2 13.8" stroke="#3a3a3a" stroke-width="1" fill="none"/>
<circle cx="17" cy="19.5" r="0.7" fill="#333"/>
<path d="M18 26.6 C20.5 28 23.5 28 26 26.6 C25 28.8 19 28.8 18 26.6 Z" fill="#fff" stroke="#3a2a2a" stroke-width="0.9"/>
<path d="M19.5 28.6 C21.5 29.4 23.5 29.4 24.8 28.6" stroke="#b4575a" stroke-width="0.9" fill="none"/>
</svg>
<div class="t" style="left:732.24px;top:957px;font-size:21.4px;line-height:21.4px;color:#0180a5;font-weight:400;letter-spacing:0.408px;">Mitchell Admin</div>
<div class="t" style="left:950.53px;top:955px;font-size:20.94px;line-height:20.94px;color:#9a6b01;font-weight:500;-webkit-text-stroke:0.55px #9a6b01;">Today</div>
<svg class="r" style="left:1122px;top:952px;" width="25" height="25" viewBox="0 0 25 25">
<circle cx="12.3" cy="12.1" r="10.1" fill="none" stroke="#5f636f" stroke-width="3.2"/>
<path d="M13.5 6.3 V13.2 H8.7" fill="none" stroke="#5f636f" stroke-width="2"/>
</svg>
<div class="t" style="left:1628.78px;top:955px;font-size:20.71px;line-height:20.71px;color:#0180a5;font-weight:400;">$ 255.00</div>
<div class="r" style="left:1724px;top:949px;width:64px;height:28px;border-radius:14px;background:#17a2b8;"></div>
<div class="t" style="left:1737.92px;top:956px;font-size:16.86px;line-height:16.86px;color:#fff;font-weight:500;-webkit-text-stroke:0.55px #fff;">RFQ</div>
<div class="r" style="left:0px;top:998px;width:1890px;height:60px;background:#fafafa;"></div>
<div class="r" style="left:0px;top:1058px;width:1890px;height:1px;background:#d8dadd;"></div>
<div class="r" style="left:24px;top:1016px;width:19px;height:19px;border:1px solid #d8dadd;background:#fff;"></div>
<svg class="r" style="left:67px;top:1011px;" width="27" height="26" viewBox="0 0 27 26"><path d="M13.5 1.8 L16.6 9.6 L25 10.1 L18.5 15.4 L20.6 23.6 L13.5 19.1 L6.4 23.6 L8.5 15.4 L2 10.1 L10.4 9.6 Z" fill="none" stroke="#4b5563" stroke-width="1.7" stroke-linejoin="round"/></svg>
<div class="t" style="left:200.56px;top:1016px;font-size:21.26px;line-height:21.26px;color:#0180a5;font-weight:500;-webkit-text-stroke:0.55px #0180a5;">P00002</div>
<div class="t" style="left:335.22px;top:1016px;font-size:21.4px;line-height:21.4px;color:#0180a5;font-weight:400;letter-spacing:0.071px;">Gemini Furniture</div>
<div class="t" style="left:510.74px;top:1016px;font-size:21.4px;line-height:21.4px;color:#0180a5;font-weight:400;letter-spacing:0.400px;">BrowseInfo</div>
<svg class="r" style="left:691px;top:1010px;" width="36" height="36" viewBox="0 0 36 36">
<defs><linearGradient id="ag" x1="0" y1="0" x2="1" y2="1"><stop offset="0" stop-color="#6a4262"/><stop offset="1" stop-color="#3e1f36"/></linearGradient></defs>
<rect x="0" y="0" width="36" height="36" rx="5" fill="url(#ag)"/>
<ellipse cx="7.3" cy="22" rx="2.4" ry="3.6" fill="#f5d2bd"/>
<path d="M9 14 C9 11 12 10.5 19 10.5 C26 10.5 30.5 11 30.5 15 L30.5 24 C30.5 30.5 25.5 33.8 20 33.8 C14.5 33.8 9.5 30.5 9.2 24 Z" fill="#fbe3cf"/>
<path d="M5 16 C4.5 8 9 3.5 16 3.4 L26 3 L30.5 1.8 L30 5 C31.5 7 31.6 10 31 12.5 C27 10.5 20 11 12.5 11.4 C11 12 10.2 15 9.8 20 L8.4 21 C7 19.5 5.6 18 5 16 Z" fill="#1c1c1e"/>
<rect x="12.6" y="16.6" width="7.9" height="5.5" rx="0.6" fill="#fff6ef" stroke="#1d1d1d" stroke-width="1.6"/>
<rect x="23.3" y="16.6" width="6.4" height="5.2" rx="0.6" fill="#fff6ef" stroke="#1d1d1d" stroke-width="1.6"/>
<path d="M20.5 18 H23.3" stroke="#1d1d1d" stroke-width="1.3"/>
<path d="M14 14.3 C15.5 13.5 17 13.4 18.6 13.6 M24.5 13.6 C25.5 13.2 26.5 13.3 27.2 13.8" stroke="#3a3a3a" stroke-width="1" fill="none"/>
<circle cx="17" cy="19.5" r="0.7" fill="#333"/>
<path d="M18 26.6 C20.5 28 23.5 28 26 26.6 C25 28.8 19 28.8 18 26.6 Z" fill="#fff" stroke="#3a2a2a" stroke-width="0.9"/>
<path d="M19.5 28.6 C21.5 29.4 23.5 29.4 24.8 28.6" stroke="#b4575a" stroke-width="0.9" fill="none"/>
</svg>
<div class="t" style="left:732.24px;top:1018px;font-size:21.4px;line-height:21.4px;color:#0180a5;font-weight:400;letter-spacing:0.408px;">Mitchell Admin</div>
<div class="t" style="left:950.53px;top:1016px;font-size:20.94px;line-height:20.94px;color:#9a6b01;font-weight:500;-webkit-text-stroke:0.55px #9a6b01;">Today</div>
<svg class="r" style="left:1120px;top:1015px;" width="29" height="23" viewBox="0 0 29 23">
<rect x="1" y="0.7" width="27.4" height="21.6" rx="2.5" fill="#9a6b01"/>
<path d="M0.5 5.5 L14.5 13.8 L28.5 5.5" fill="none" stroke="#fff" stroke-width="2"/>
</svg>
<div class="t" style="left:1151.03px;top:1016px;font-size:21.4px;line-height:21.4px;color:#0180a5;font-weight:400;">Send specifications</div>
<div class="t" style="left:1611.28px;top:1015px;font-size:20.76px;line-height:20.76px;color:#0180a5;font-weight:400;">$ 3,095.00</div>
<div class="r" style="left:1724px;top:1010px;width:64px;height:28px;border-radius:14px;background:#17a2b8;"></div>
<div class="t" style="left:1737.92px;top:1017px;font-size:16.86px;line-height:16.86px;color:#fff;font-weight:500;-webkit-text-stroke:0.55px #fff;">RFQ</div>
<div class="r" style="left:0px;top:1059px;width:1890px;height:60px;background:#fff;"></div>
<div class="r" style="left:0px;top:1119px;width:1890px;height:1px;background:#d8dadd;"></div>
<div class="r" style="left:24px;top:1077px;width:19px;height:19px;border:1px solid #d8dadd;background:#fff;"></div>
<svg class="r" style="left:67px;top:1072px;" width="27" height="26" viewBox="0 0 27 26"><path d="M13.5 1.8 L16.6 9.6 L25 10.1 L18.5 15.4 L20.6 23.6 L13.5 19.1 L6.4 23.6 L8.5 15.4 L2 10.1 L10.4 9.6 Z" fill="none" stroke="#4b5563" stroke-width="1.7" stroke-linejoin="round"/></svg>
<div class="t" style="left:200.56px;top:1077px;font-size:21.25px;line-height:21.25px;color:#0180a5;font-weight:500;-webkit-text-stroke:0.55px #0180a5;">P00001</div>
<div class="t" style="left:336.21px;top:1076px;font-size:21.01px;line-height:21.01px;color:#0180a5;font-weight:400;">Wood Corner</div>
<div class="t" style="left:510.74px;top:1077px;font-size:21.4px;line-height:21.4px;color:#0180a5;font-weight:400;letter-spacing:0.400px;">BrowseInfo</div>
<svg class="r" style="left:691px;top:1071px;" width="36" height="36" viewBox="0 0 36 36">
<defs><linearGradient id="ag" x1="0" y1="0" x2="1" y2="1"><stop offset="0" stop-color="#6a4262"/><stop offset="1" stop-color="#3e1f36"/></linearGradient></defs>
<rect x="0" y="0" width="36" height="36" rx="5" fill="url(#ag)"/>
<ellipse cx="7.3" cy="22" rx="2.4" ry="3.6" fill="#f5d2bd"/>
<path d="M9 14 C9 11 12 10.5 19 10.5 C26 10.5 30.5 11 30.5 15 L30.5 24 C30.5 30.5 25.5 33.8 20 33.8 C14.5 33.8 9.5 30.5 9.2 24 Z" fill="#fbe3cf"/>
<path d="M5 16 C4.5 8 9 3.5 16 3.4 L26 3 L30.5 1.8 L30 5 C31.5 7 31.6 10 31 12.5 C27 10.5 20 11 12.5 11.4 C11 12 10.2 15 9.8 20 L8.4 21 C7 19.5 5.6 18 5 16 Z" fill="#1c1c1e"/>
<rect x="12.6" y="16.6" width="7.9" height="5.5" rx="0.6" fill="#fff6ef" stroke="#1d1d1d" stroke-width="1.6"/>
<rect x="23.3" y="16.6" width="6.4" height="5.2" rx="0.6" fill="#fff6ef" stroke="#1d1d1d" stroke-width="1.6"/>
<path d="M20.5 18 H23.3" stroke="#1d1d1d" stroke-width="1.3"/>
<path d="M14 14.3 C15.5 13.5 17 13.4 18.6 13.6 M24.5 13.6 C25.5 13.2 26.5 13.3 27.2 13.8" stroke="#3a3a3a" stroke-width="1" fill="none"/>
<circle cx="17" cy="19.5" r="0.7" fill="#333"/>
<path d="M18 26.6 C20.5 28 23.5 28 26 26.6 C25 28.8 19 28.8 18 26.6 Z" fill="#fff" stroke="#3a2a2a" stroke-width="0.9"/>
<path d="M19.5 28.6 C21.5 29.4 23.5 29.4 24.8 28.6" stroke="#b4575a" stroke-width="0.9" fill="none"/>
</svg>
<div class="t" style="left:732.24px;top:1079px;font-size:21.4px;line-height:21.4px;color:#0180a5;font-weight:400;letter-spacing:0.408px;">Mitchell Admin</div>
<div class="t" style="left:950.53px;top:1077px;font-size:20.94px;line-height:20.94px;color:#9a6b01;font-weight:500;-webkit-text-stroke:0.55px #9a6b01;">Today</div>
<svg class="r" style="left:1122px;top:1074px;" width="25" height="25" viewBox="0 0 25 25">
<circle cx="12.3" cy="12.1" r="10.1" fill="none" stroke="#5f636f" stroke-width="3.2"/>
<path d="M13.5 6.3 V13.2 H8.7" fill="none" stroke="#5f636f" stroke-width="2"/>
</svg>
<div class="t" style="left:1611.28px;top:1077px;font-size:20.76px;line-height:20.76px;color:#0180a5;font-weight:400;">$ 3,026.50</div>
<div class="r" style="left:1724px;top:1071px;width:64px;height:28px;border-radius:14px;background:#17a2b8;"></div>
<div class="t" style="left:1737.92px;top:1078px;font-size:16.86px;line-height:16.86px;color:#fff;font-weight:500;-webkit-text-stroke:0.55px #fff;">RFQ</div>
<div class="r" style="left:0px;top:1118px;width:1890px;height:2px;background:#e2e4e8;"></div>
<div class="r" style="left:0px;top:1120px;width:1890px;height:31px;background:#f9fafb;"></div>
<div class="t" style="left:1599.72px;top:1137px;font-size:20.8px;line-height:20.8px;color:#111827;font-weight:700;">$ 60,561.50</div>
<div class="r" style="left:651px;top:387px;width:238px;height:483px;border:3px solid #0000ff;"></div>
<div class="r" style="left:1890px;top:390px;width:15px;height:761px;background:#f1f1f1;"></div>
<div class="r" style="left:1892px;top:405px;width:11px;height:711px;background:#c1c1c1;"></div>
<svg class="r" style="left:1892px;top:393px;" width="11" height="8" viewBox="0 0 11 8"><path d="M1.5 6.5 H9.5 L5.5 2 Z" fill="#a3a3a3"/></svg>
<svg class="r" style="left:1892px;top:1139px;" width="11" height="8" viewBox="0 0 11 8"><path d="M1.5 1.5 H9.5 L5.5 6 Z" fill="#505050"/></svg>
<div class="r" style="left:0px;top:1151px;width:1890px;height:14px;background:#f1f1f1;"></div>
<div class="r" style="left:15px;top:1153px;width:1814px;height:12px;background:#c1c1c1;"></div>
<svg class="r" style="left:3px;top:1153px;" width="8" height="11" viewBox="0 0 8 11"><path d="M6.5 1.5 V9.5 L2 5.5 Z" fill="#a3a3a3"/></svg>
<svg class="r" style="left:1879px;top:1153px;" width="8" height="11" viewBox="0 0 8 11"><path d="M1.5 1.5 V9.5 L6 5.5 Z" fill="#505050"/></svg>
<div class="r" style="left:0px;top:1165px;width:1920px;height:1px;background:#fff;"></div>
<div class="r" style="left:0px;top:1166px;width:1920px;height:1px;background:#000;"></div>
</body></html>
